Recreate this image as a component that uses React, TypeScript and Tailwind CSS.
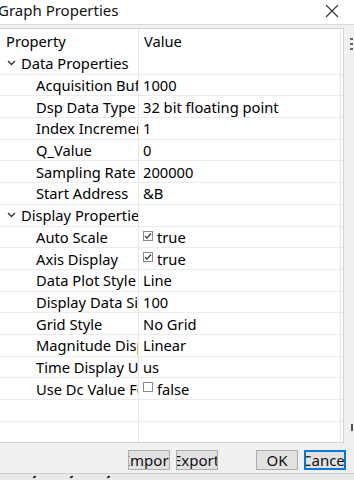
import React from "react";

type Row =
  | { kind: "group"; label: string }
  | { kind: "item"; label: string; value: string; check?: boolean }
  | { kind: "empty" };

const rows: Row[] = [
  { kind: "group", label: "Data Properties" },
  { kind: "item", label: "Acquisition Buffer Size", value: "1000" },
  { kind: "item", label: "Dsp Data Type", value: "32 bit floating point" },
  { kind: "item", label: "Index Increment", value: "1" },
  { kind: "item", label: "Q_Value", value: "0" },
  { kind: "item", label: "Sampling Rate", value: "200000" },
  { kind: "item", label: "Start Address", value: "&B" },
  { kind: "group", label: "Display Properties" },
  { kind: "item", label: "Auto Scale", value: "true", check: true },
  { kind: "item", label: "Axis Display", value: "true", check: true },
  { kind: "item", label: "Data Plot Style", value: "Line" },
  { kind: "item", label: "Display Data Size", value: "100" },
  { kind: "item", label: "Grid Style", value: "No Grid" },
  { kind: "item", label: "Magnitude Display", value: "Linear" },
  { kind: "item", label: "Time Display Unit", value: "us" },
  { kind: "item", label: "Use Dc Value For", value: "false", check: false },
  { kind: "empty" },
  { kind: "empty" },
];

const font = { fontFamily: '"Noto Sans", "Open Sans", sans-serif' };

function Chevron() {
  return (
    <svg width="9" height="6" viewBox="0 0 9 6" className="shrink-0">
      <path d="M1 1 L4.5 4.5 L8 1" fill="none" stroke="#333" strokeWidth="1.3" />
    </svg>
  );
}

function Check({ checked }: { checked: boolean }) {
  return (
    <svg width="10" height="10" viewBox="0 0 10 10" className="shrink-0 self-start mt-[4px]">
      <rect x="0.5" y="0.5" width="9" height="9" fill="#fff" stroke="#8a8a8a" />
      {checked && (
        <path d="M2 5 L4 7.2 L8 2.5" fill="none" stroke="#333" strokeWidth="1.2" />
      )}
    </svg>
  );
}

function Btn({ text, offset, focused }: { text: string; offset: string; focused?: boolean }) {
  return (
    <div
      className={
        "w-[42px] h-[20px] flex items-center overflow-hidden whitespace-nowrap bg-[#e1e1e1] text-[15px] leading-[18px] text-[#111] " +
        (focused ? "border-2 border-[#0078d7]" : "border border-[#adadad]")
      }
    >
      <span className={offset}>{text}</span>
    </div>
  );
}

export default function App() {
  return (
    <div className="w-[354px] h-[480px] overflow-hidden bg-[#f0f0f0] flex flex-col text-black" style={font}>
      {/* title bar */}
      <div className="h-[25px] shrink-0 bg-white flex items-center justify-between border-b border-[#d8d8d8]">
        <span className="text-[15px] leading-none ml-[-2px] -mt-[4px] text-[#111]">Graph Properties</span>
        <svg width="14" height="14" viewBox="0 0 14 14" className="mr-[15px] -mt-[3px]">
          <path d="M1 1 L13 13 M13 1 L1 13" stroke="#333" strokeWidth="1.1" />
        </svg>
      </div>

      <div className="flex mt-[3px]">
        {/* grid */}
        <div className="w-[344px] h-[415px] shrink-0 bg-white border border-[#d4d4d4] border-l-0 flex flex-col relative overflow-hidden text-[14.7px]">
          <div className="absolute top-0 bottom-0 left-[138px] w-px bg-[#e6e6e6]" />
          <div className="absolute top-0 bottom-0 right-[2px] w-px bg-[#e6e6e6]" />
          <div className="h-[24px] shrink-0 flex items-center">
            <div className="w-[139px] pl-[6px]">Property</div>
            <div className="pl-[5px]">Value</div>
          </div>
          {rows.map((r, i) => (
            <div key={i} className="h-[21.7px] shrink-0 flex items-center border-b border-[#ececec] leading-[20px]">
              {r.kind === "group" && (
                <div className="w-[139px] shrink-0 flex items-center overflow-hidden whitespace-nowrap pl-[7px] gap-[5px]">
                  <Chevron />
                  <span>{r.label}</span>
                </div>
              )}
              {r.kind === "item" && (
                <>
                  <div className="w-[139px] shrink-0 overflow-hidden whitespace-nowrap pl-[36px]">{r.label}</div>
                  <div className="flex items-center gap-[4px] pl-[4px] whitespace-nowrap h-full">
                    {r.check !== undefined && <Check checked={r.check} />}
                    <span>{r.value}</span>
                  </div>
                </>
              )}
            </div>
          ))}
        </div>
        {/* right edge marks */}
        <div className="flex-1 relative">
          <div className="absolute left-[6px] top-[10px] w-[3px] h-[2px] bg-[#666]" />
          <div className="absolute left-[6px] top-[15px] w-[3px] h-[2px] bg-[#666]" />
          <div className="absolute left-[6px] top-[20px] w-[3px] h-[2px] bg-[#666]" />
          <div className="absolute left-[7px] top-[396px] w-[2px] h-[7px] bg-[#555]" />
        </div>
      </div>

      {/* buttons */}
      <div className="flex items-center mt-[7px] h-[20px]">
        <div className="ml-[128px]">
          <Btn text="Import" offset="ml-[-4px]" />
        </div>
        <div className="ml-[6px]">
          <Btn text="Export" offset="ml-[-4px]" />
        </div>
        <div className="ml-[38px]">
          <Btn text="OK" offset="mx-auto" />
        </div>
        <div className="ml-[6px]">
          <Btn text="Cancel" offset="ml-[-4px]" focused />
        </div>
      </div>

      {/* bottom strip */}
      <div className="mt-[3px] flex-1 border-t border-[#d0d0d0] bg-[#e9e9e9] relative">
        <div className="absolute left-[33px] top-[2px] w-[3px] h-[2px] bg-[#222] rotate-[-30deg]" />
        <div className="absolute left-[70px] top-[2px] w-[3px] h-[2px] bg-[#222] rotate-[-30deg]" />
        <div className="absolute left-[107px] top-[2px] w-[3px] h-[2px] bg-[#222] rotate-[-30deg]" />
      </div>
    </div>
  );
}
